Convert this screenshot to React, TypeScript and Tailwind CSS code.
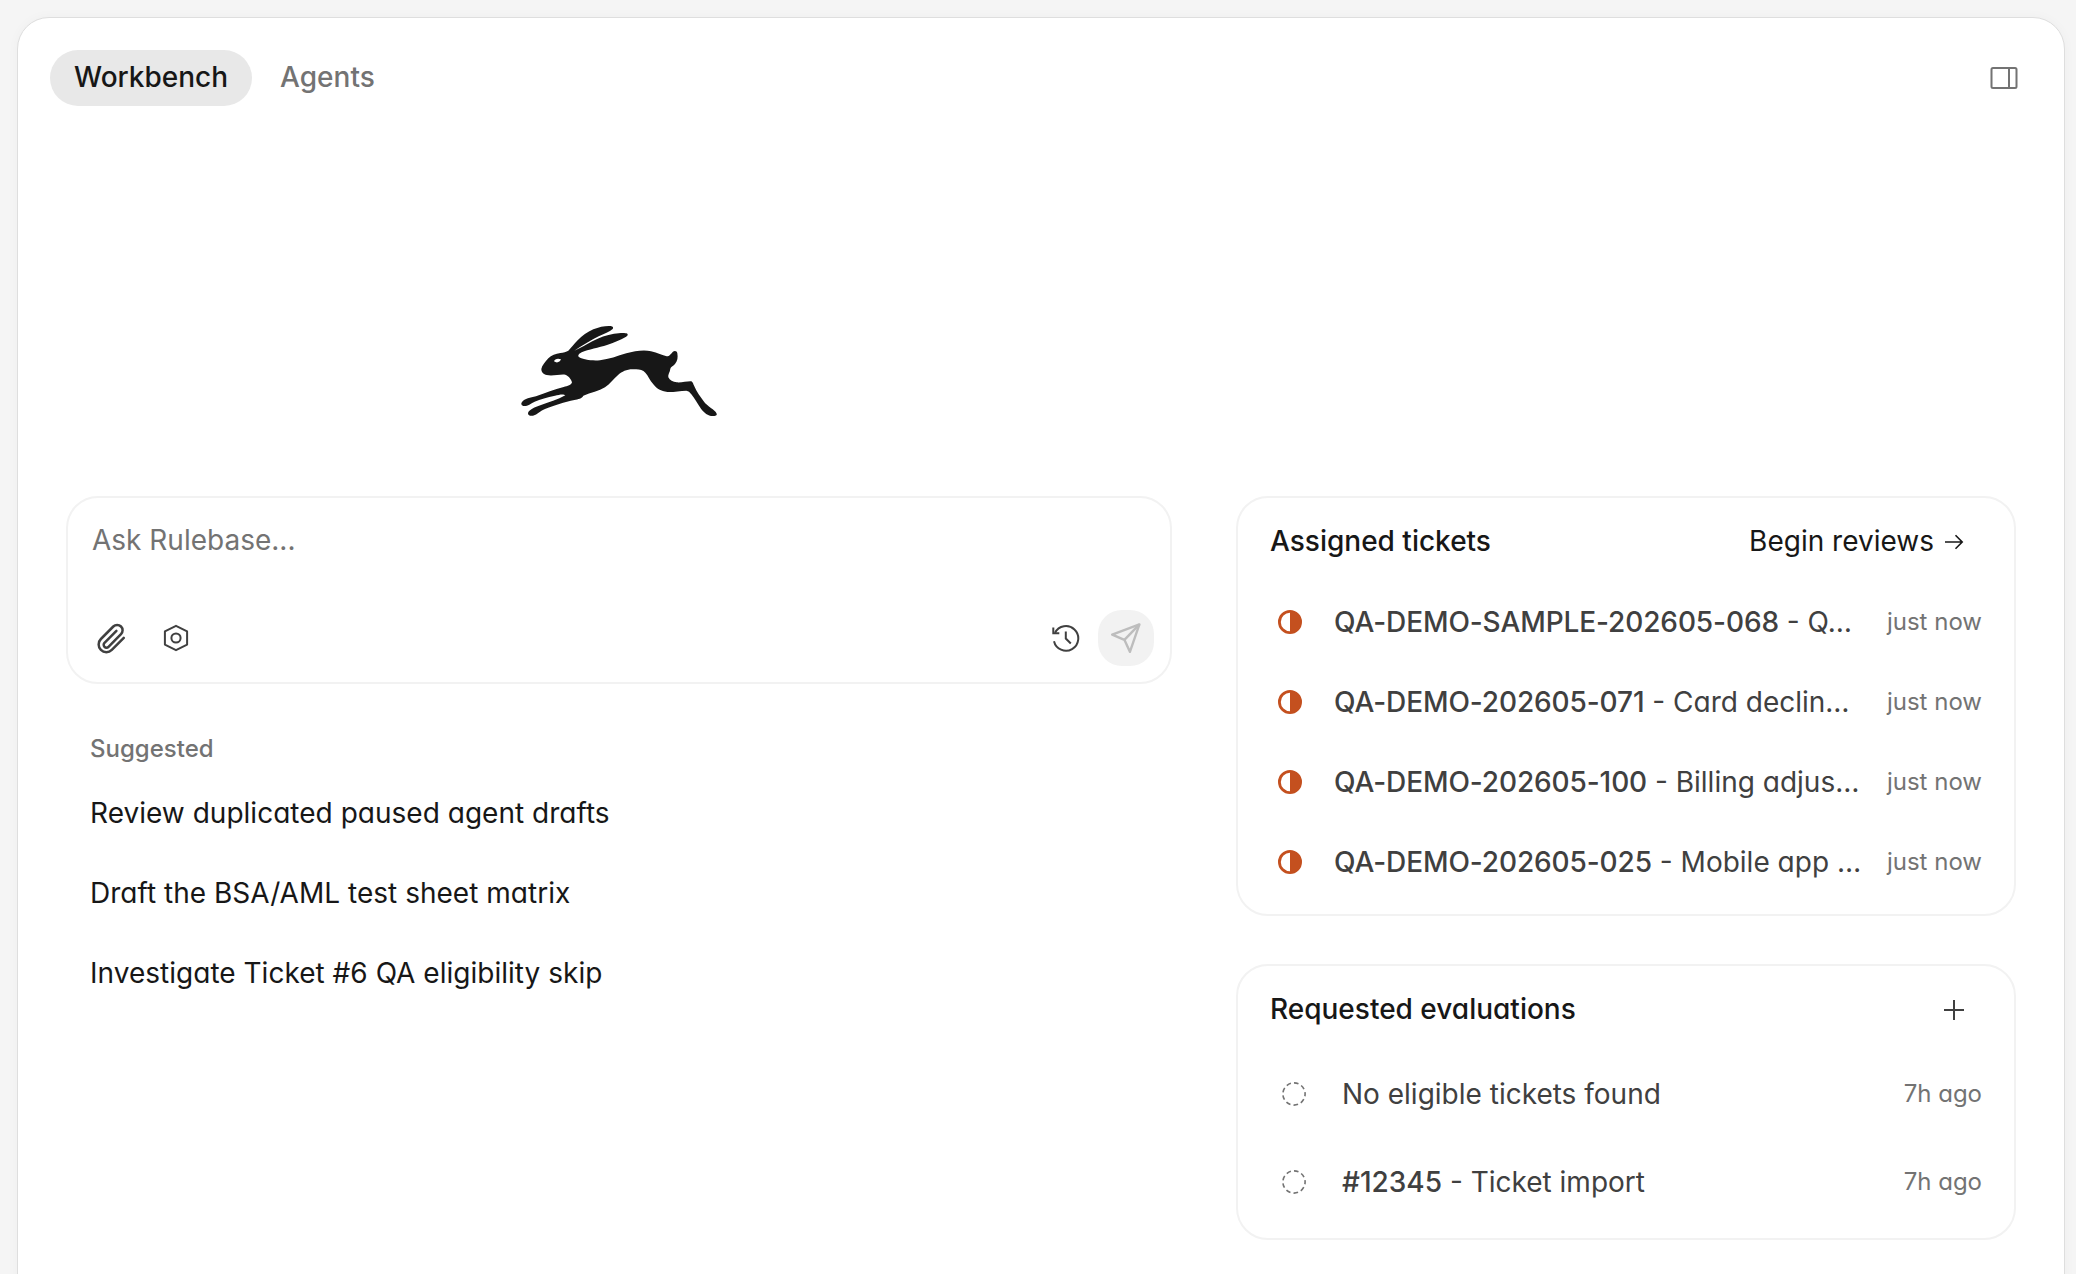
import React from 'react';

type IconProps = { className?: string };

const RabbitLogo: React.FC = () => (
  <svg viewBox="0 0 660 360" className="w-[220px] h-[120px] shrink-0" fill="#171717">
    <path
      fillRule="evenodd"
      d="M94 177C96 167 105 156 115 145C124 135 137 131 151 129C160 128 169 125 175 122C184 113 192 102 203 91C216 77 232 66 250 58C268 50 287 47 302 48C309 49 311 53 308 57C299 65 282 71 266 79C244 90 219 105 193 122C212 114 228 104 247 94C268 82 290 75 312 71C330 69 345 68 352 71C355 74 352 78 347 81C331 90 311 98 291 105C267 113 235 118 215 127C205 132 202 138 208 142C219 149 245 153 270 151C297 148 322 138 349 130C374 123 402 119 423 124C443 128 457 137 470 139C479 139 483 131 488 126C493 121 501 122 502 130C504 142 503 153 495 162C489 169 482 170 481 176C480 186 473 194 475 202C479 211 489 216 500 217C515 218 529 214 541 214C548 213 549 221 553 229C560 246 570 259 581 274C592 290 615 299 620 311C622 316 616 318 608 318C594 318 582 308 573 296C562 280 554 265 544 253C539 246 536 243 529 242C510 242 490 247 472 246C453 244 440 236 430 223C419 210 415 198 406 188C398 179 386 177 372 178C350 177 337 185 325 194C310 206 301 222 285 232C267 243 242 248 220 257C216 266 204 267 193 270C165 276 130 287 105 297C92 302 82 314 69 317C60 319 53 315 54 309C58 298 75 292 91 286C115 277 144 269 166 256C161 251 147 254 135 257C111 262 91 268 74 275C61 281 55 288 43 288C34 288 32 281 36 276C44 265 61 264 78 259C107 248 132 238 161 231C173 228 184 225 186 217C184 208 175 197 166 194C149 192 128 199 110 195C101 193 94 187 94 177ZM132 154C134 147 143 144 153 148C150 156 141 161 132 154Z"
    />
  </svg>
);

const PanelIcon: React.FC<IconProps> = ({ className }) => (
  <svg viewBox="0 0 28 24" className={className} fill="none" stroke="currentColor" strokeWidth="2">
    <rect x="1.5" y="2" width="25" height="20" rx="1.5" />
    <path d="M19 2v20" />
  </svg>
);

const PaperclipIcon: React.FC<IconProps> = ({ className }) => (
  <svg viewBox="0 0 32 32" className={className} fill="none" stroke="currentColor" strokeWidth="2.5" strokeLinecap="round" strokeLinejoin="round">
    <path d="M20.4 8.9 8.5 20.8a2.8 2.8 0 0 0 4 4L25 12.2a5.4 5.4 0 0 0-7.7-7.7L4.9 17a7.7 7.7 0 0 0 10.9 10.9L27.8 15.9" />
  </svg>
);

const HexIcon: React.FC<IconProps> = ({ className }) => (
  <svg viewBox="0 0 28 28" className={className} fill="none" stroke="currentColor" strokeWidth="2" strokeLinejoin="round">
    <path d="M14 1.8 25.1 7.4v13.2L14 26.2 2.9 20.6V7.4Z" />
    <circle cx="14" cy="14" r="4.6" />
  </svg>
);

const HistoryIcon: React.FC<IconProps> = ({ className }) => (
  <svg viewBox="0 0 28 28" className={className} fill="none" stroke="currentColor" strokeWidth="2">
    <path d="M2 17.2A12.3 12.3 0 1 0 3 8.8" />
    <path d="M1.3 3.6v5.6h6" />
    <path d="M13.8 7.6v6.9l5 5" />
  </svg>
);

const SendIcon: React.FC<IconProps> = ({ className }) => (
  <svg viewBox="0 0 30 30" className={className} fill="none" stroke="currentColor" strokeWidth="2.4" strokeLinejoin="round">
    <path d="M28.4 1.4 1.2 11.6 13.4 16.8 18.9 28.8Z" />
    <path d="M28.4 1.4 13.4 16.8" />
  </svg>
);

const ArrowIcon: React.FC<IconProps> = ({ className }) => (
  <svg viewBox="0 0 20 16" className={className} fill="none" stroke="currentColor" strokeWidth="1.6">
    <path d="M1 8h17.2M11.5 1.2 18.2 8l-6.7 6.8" />
  </svg>
);

const HalfCircleIcon: React.FC = () => (
  <svg viewBox="0 0 24 24" className="w-6 h-6 shrink-0 text-[#c4501f]">
    <circle cx="12" cy="12" r="10.6" fill="none" stroke="currentColor" strokeWidth="2.8" />
    <path d="M12 1a11 11 0 0 1 0 22Z" fill="currentColor" />
  </svg>
);

const DashedCircleIcon: React.FC = () => (
  <svg viewBox="0 0 24 24" className="w-6 h-6 shrink-0 text-[#737373]">
    <circle cx="12" cy="12" r="11.1" fill="none" stroke="currentColor" strokeWidth="1.6" strokeDasharray="4.6 3.15" strokeDashoffset="2.3" />
  </svg>
);

const suggestions = [
  'Review duplicated paused agent drafts',
  'Draft the BSA/AML test sheet matrix',
  'Investigate Ticket #6 QA eligibility skip',
];

const tickets = [
  { id: 'QA-DEMO-SAMPLE-202605-068', title: 'Q…', time: 'just now' },
  { id: 'QA-DEMO-202605-071', title: 'Card declin…', time: 'just now' },
  { id: 'QA-DEMO-202605-100', title: 'Billing adjus…', time: 'just now' },
  { id: 'QA-DEMO-202605-025', title: 'Mobile app …', time: 'just now' },
];

const evaluations = [
  { id: '', title: 'No eligible tickets found', time: '7h ago' },
  { id: '#12345', title: 'Ticket import', time: '7h ago' },
];

const Header: React.FC = () => (
  <header className="flex items-center justify-between h-14">
    <nav className="flex items-center gap-1 font-medium">
      <button className="h-14 px-6 pb-[3px] rounded-full bg-[#e8e8e8] text-[#171717]">Workbench</button>
      <button className="h-14 px-6 pb-[3px] rounded-full text-[#737373]">Agents</button>
    </nav>
    <button className="mr-[14px] text-[#737373]">
      <PanelIcon className="w-7 h-6" />
    </button>
  </header>
);

const Composer: React.FC = () => (
  <div className="flex flex-col justify-between h-[188px] rounded-[32px] border-2 border-[#f2f2f2] pl-6 pr-4 pt-[22px] pb-4">
    <div className="leading-10 text-[#737373] [font-feature-settings:normal]">Ask Rulebase...</div>
    <div className="flex items-center justify-between text-[#404040]">
      <div className="flex items-center pl-1">
        <PaperclipIcon className="w-8 h-8" />
        <HexIcon className="w-7 h-7 ml-[34px]" />
      </div>
      <div className="flex items-center">
        <HistoryIcon className="w-7 h-7 mr-[18px]" />
        <button className="flex items-center justify-center w-14 h-14 rounded-3xl bg-[#f2f2f2] text-[#bdbdbd]">
          <SendIcon className="w-[30px] h-[30px]" />
        </button>
      </div>
    </div>
  </div>
);

const AssignedTickets: React.FC = () => (
  <section className="h-[420px] rounded-[32px] border-2 border-[#f2f2f2] px-8 pt-[15px]">
    <div className="flex items-center justify-between h-14 text-[#171717]">
      <h2 className="font-medium">Assigned tickets</h2>
      <button className="flex items-center gap-[10px] mr-[18px]">
        Begin reviews
        <ArrowIcon className="w-5 h-4 mt-px" />
      </button>
    </div>
    <ul className="pt-[13px]">
      {tickets.map((ticket) => (
        <li key={ticket.id} className="flex items-center h-20 pl-2">
          <HalfCircleIcon />
          <div className="flex-1 min-w-0 ml-8 pb-px truncate text-[#404040]">
            <span className="font-medium tracking-[-0.1px]">{ticket.id}</span> - {ticket.title}
          </div>
          <span className="ml-6 text-2xl text-[#737373]">{ticket.time}</span>
        </li>
      ))}
    </ul>
  </section>
);

const RequestedEvaluations: React.FC = () => (
  <section className="h-[276px] rounded-[32px] border-2 border-[#f2f2f2] px-8 pt-[15px]">
    <div className="flex items-center justify-between h-14 text-[#171717]">
      <h2 className="font-medium">Requested evaluations</h2>
      <svg viewBox="0 0 20 20" className="w-5 h-5 mr-[18px] mt-0.5 text-[#404040]" stroke="currentColor" strokeWidth="2">
        <path d="M10 0v20M0 10h20" />
      </svg>
    </div>
    <ul className="pt-[13px]">
      {evaluations.map((item) => (
        <li key={item.title} className="flex items-center h-[88px] pl-3">
          <DashedCircleIcon />
          <div className="flex-1 min-w-0 ml-9 pb-px truncate text-[#404040]">
            {item.id && (
              <>
                <span className="font-medium">{item.id}</span>
                {' - '}
              </>
            )}
            {item.title}
          </div>
          <span className="ml-6 text-2xl text-[#737373]">{item.time}</span>
        </li>
      ))}
    </ul>
  </section>
);

export default function App() {
  return (
    <div className="h-screen overflow-hidden bg-[#f5f5f5] pt-[17px] pl-[17px] pr-[11px] font-['Inter',sans-serif] text-[28px] leading-10 [font-feature-settings:'cv11']">
      <main className="h-[1300px] rounded-[32px] border border-[#dedede] bg-white px-8 pt-8 shadow-[0_0_12px_rgba(0,0,0,0.03)]">
        <Header />
        <div className="grid grid-cols-[1106px_780px] gap-16 px-4">
          <div>
            <div className="flex justify-center pt-[204px] pb-[66px] pl-0.5">
              <RabbitLogo />
            </div>
            <Composer />
            <div className="pl-6 pt-[45px]">
              <div className="text-2xl leading-10 font-medium text-[#737373]">Suggested</div>
              <ul className="pt-1 text-[#171717]">
                {suggestions.map((text) => (
                  <li key={text} className="flex items-center h-20 tracking-[0.02px]">
                    {text}
                  </li>
                ))}
              </ul>
            </div>
          </div>
          <div className="flex flex-col gap-12 pt-[390px]">
            <AssignedTickets />
            <RequestedEvaluations />
          </div>
        </div>
      </main>
    </div>
  );
}
